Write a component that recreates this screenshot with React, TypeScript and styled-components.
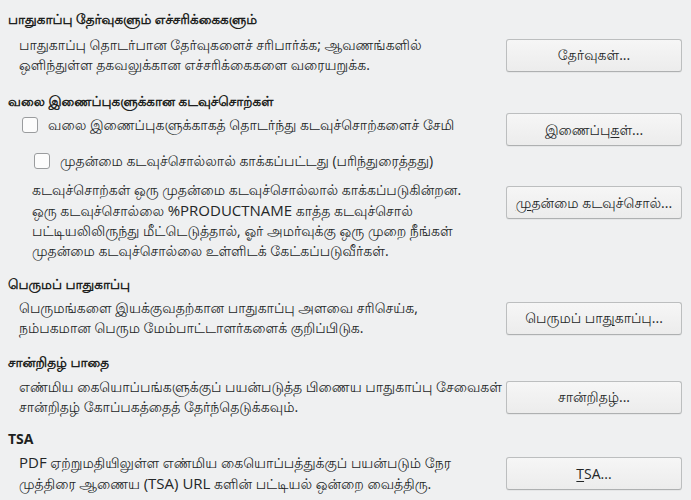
import React from "react";
import styled, { createGlobalStyle } from "styled-components";

const Global = createGlobalStyle`
  html, body { margin: 0; padding: 0; background: #eff0f1; }
  body {
    font-family: "Open Sans", "Lohit Tamil", "Noto Sans Tamil", sans-serif;
    font-size: 14px;
    color: #232627;
    width: 691px;
    height: 500px;
    overflow: hidden;
  }
`;

const Page = styled.div`
  display: flex;
  flex-direction: column;
  padding: 9px 9px 0 8px;
  box-sizing: border-box;
  width: 691px;
  height: 500px;
`;

const Section = styled.section<{ $top?: number }>`
  display: flex;
  flex-direction: column;
  margin-top: ${(p) => p.$top ?? 0}px;
`;

const Heading = styled.h2<{ $latin?: boolean }>`
  margin: 0;
  font-size: ${(p) => (p.$latin ? 14 : 13.5)}px;
  font-weight: 700;
  line-height: 20px;
  white-space: nowrap;
  color: #1d1f20;
`;

const Row = styled.div<{ $top?: number }>`
  display: grid;
  grid-template-columns: 1fr 176px;
  align-items: center;
  margin-top: ${(p) => p.$top ?? 0}px;
`;

const Desc = styled.p<{ $indent?: number }>`
  margin: 0;
  padding-left: ${(p) => p.$indent ?? 11}px;
  line-height: 20px;
  white-space: nowrap;
`;

const Latin = styled.span`
  font-size: 15px;
`;

const Button = styled.button<{ $self?: string; $offset?: number }>`
  box-sizing: border-box;
  width: 176px;
  height: 33px;
  align-self: ${(p) => p.$self ?? "center"};
  margin-top: ${(p) => p.$offset ?? 0}px;
  border: 1px solid #bcbebf;
  border-bottom-color: #aeb0b1;
  border-radius: 3px;
  background: linear-gradient(#f6f6f6, #ececec);
  font-family: inherit;
  font-size: 14px;
  color: #232627;
  padding: 0 6px;
  white-space: nowrap;
  box-shadow: 0 1px 0 rgba(0, 0, 0, 0.04);
  u { text-decoration: underline; text-underline-offset: 2px; }
`;

const CheckRow = styled.label<{ $indent: number; $top?: number }>`
  display: flex;
  align-items: center;
  gap: 10px;
  padding-left: ${(p) => p.$indent}px;
  margin-top: ${(p) => p.$top ?? 0}px;
  line-height: 16px;
  align-self: start;
  white-space: nowrap;
`;

const Box = styled.span`
  box-sizing: border-box;
  width: 16px;
  height: 16px;
  flex: none;
  border: 1px solid #9a9c9e;
  border-radius: 3px;
  background: #fcfcfc;
`;

const Gap = styled.div`
  height: 0;
`;

export default function App() {
  return (
    <>
      <Global />
      <Page>
        <Section>
          <Heading>பாதுகாப்பு தேர்வுகளும் எச்சரிக்கைகளும்</Heading>
          <Row $top={6}>
            <Desc>
              பாதுகாப்பு தொடர்பான தேர்வுகளைச் சரிபார்க்க; ஆவணங்களில்
              <br />
              ஒளிந்துள்ள தகவலுக்கான எச்சரிக்கைகளை வரையறுக்க.
            </Desc>
            <Button>தேர்வுகள்...</Button>
          </Row>
        </Section>

        <Section $top={16}>
          <Heading>வலை இணைப்புகளுக்கான கடவுச்சொற்கள்</Heading>
          <Row $top={2}>
            <CheckRow $indent={14} $top={4}>
              <Box />
              வலை இணைப்புகளுக்காகத் தொடர்ந்து கடவுச்சொற்களைச் சேமி
            </CheckRow>
            <Button $self="start">
              இணைப்பு<u>க</u>ள்...
            </Button>
          </Row>
          <Row $top={7}>
            <CheckRow $indent={26}>
              <Box />
              முதன்மை கடவுச்சொல்லால் காக்கப்பட்டது (பரிந்துரைத்தது)
            </CheckRow>
            <Gap />
          </Row>
          <Row $top={11}>
            <Desc $indent={24}>
              கடவுச்சொற்கள் ஒரு முதன்மை கடவுச்சொல்லால் காக்கப்படுகின்றன.
              <br />
              ஒரு கடவுச்சொல்லை <Latin>%PRODUCTNAME</Latin> காத்த கடவுச்சொல்
              <br />
              பட்டியலிலிருந்து மீட்டெடுத்தால், ஓர் அமர்வுக்கு ஒரு முறை நீங்கள்
              <br />
              முதன்மை கடவுச்சொல்லை உள்ளிடக் கேட்கப்படுவீர்கள்.
            </Desc>
            <Button $self="start" $offset={6}>
              <u>மு</u>தன்மை கடவுச்சொல்...
            </Button>
          </Row>
        </Section>

        <Section $top={13}>
          <Heading>பெருமப் பாதுகாப்பு</Heading>
          <Row $top={4}>
            <Desc>
              பெருமங்களை இயக்குவதற்கான பாதுகாப்பு அளவை சரிசெய்க,
              <br />
              நம்பகமான பெரும மேம்பாட்டாளர்களைக் குறிப்பிடுக.
            </Desc>
            <Button>
              பெருமப் பா<u>து</u>காப்பு...
            </Button>
          </Row>
        </Section>

        <Section $top={14}>
          <Heading>சான்றிதழ் பாதை</Heading>
          <Row $top={5}>
            <Desc>
              எண்மிய கையொப்பங்களுக்குப் பயன்படுத்த பிணைய பாதுகாப்பு சேவைகள்
              <br />
              சான்றிதழ் கோப்பகத்தைத் தேர்ந்தெடுக்கவும்.
            </Desc>
            <Button>சான்றிதழ்...</Button>
          </Row>
        </Section>

        <Section $top={12}>
          <Heading $latin>TSA</Heading>
          <Row $top={3}>
            <Desc>
              <Latin>PDF</Latin> ஏற்றுமதியிலுள்ள எண்மிய கையொப்பத்துக்குப் பயன்படும் நேர
              <br />
              முத்திரை ஆணைய <Latin>(TSA) URL</Latin> களின் பட்டியல் ஒன்றை வைத்திரு.
            </Desc>
            <Button>
              <u>T</u>SA...
            </Button>
          </Row>
        </Section>
      </Page>
    </>
  );
}
